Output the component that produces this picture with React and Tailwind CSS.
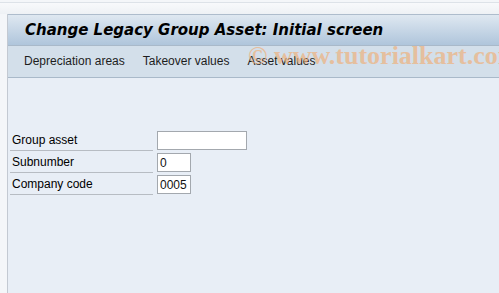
import React from 'react';

const rows = [
  { label: 'Group asset', value: '', wide: true },
  { label: 'Subnumber', value: '0' },
  { label: 'Company code', value: '0005' },
];

const App = () => {
  return (
    <div
      className="relative h-[293px] w-[499px] overflow-hidden bg-[#f4f6f9]"
      style={{ fontFamily: '"Liberation Sans", Arial, sans-serif' }}
    >
      {/* top strip */}
      <div className="h-[12px] border-t border-[#dde2e8] mt-[2px] bg-gradient-to-b from-[#f8f9fb] to-[#eef1f5]" />

      <div className="ml-[7px] flex h-[279px] flex-col border-l border-[#c3c9d2] bg-[#e8eef6]">
        {/* title bar */}
        <div className="flex h-[31px] items-center border-t border-[#aebccc] bg-gradient-to-b from-[#dfe8f1] to-[#afc5db] pl-[17px]">
          <h1
            className="text-[15px] font-bold italic text-black"
            style={{ fontFamily: '"DejaVu Sans", sans-serif' }}
          >
            Change Legacy Group Asset: Initial screen
          </h1>
        </div>

        {/* toolbar */}
        <div className="flex h-[33px] items-center gap-[18px] border-y border-[#a9b9c9] bg-[#d3dfea] pl-[16px] pb-[2px] text-[12px] text-[#1d1d1d]">
          <span>Depreciation areas</span>
          <span>Takeover values</span>
          <span>Asset values</span>
        </div>

        {/* form */}
        <div className="mt-[51px] flex flex-col pl-[2px] text-[12px] text-black">
          {rows.map((r) => (
            <div key={r.label} className="flex h-[22px] items-start">
              <div className="flex h-[22px] w-[143px] items-center border-b border-[#b7bcc3] pl-[2px]">
                {r.label}
              </div>
              <div
                className={`ml-[4px] mt-[2px] flex h-[19px] items-center border border-[#a3a8ae] bg-white pl-[2px] text-[12px] text-[#111] ${
                  r.wide ? 'w-[90px]' : 'w-[34px]'
                }`}
              >
                {r.value}
              </div>
            </div>
          ))}
        </div>
      </div>

      {/* watermark */}
      <div
        className="pointer-events-none absolute left-[248px] top-[36px] whitespace-nowrap text-[26px] font-bold text-[#eeb27e] opacity-70"
        style={{ fontFamily: '"Liberation Serif", serif' }}
      >
        © www.tutorialkart.com
      </div>
    </div>
  );
};

export default App;
